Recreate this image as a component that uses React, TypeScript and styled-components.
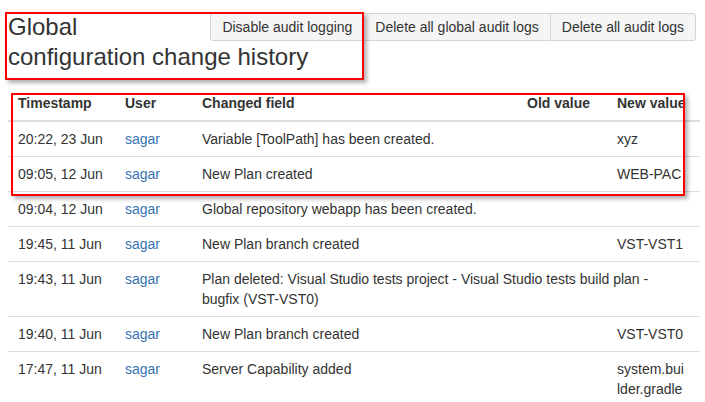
import React from "react";
import styled, { createGlobalStyle } from "styled-components";

const GlobalStyle = createGlobalStyle`
  body {
    margin: 0;
    background: #fff;
    color: #333;
    font-family: "Liberation Sans", Arial, sans-serif;
    font-size: 14px;
    line-height: 20px;
  }
`;

const Page = styled.div`
  position: relative;
  padding: 0 9px 0 8px;
`;

// title wraps round the floated buttons, as in the original page
const Header = styled.div`
  display: flow-root;
  padding-top: 12px;
`;

const Title = styled.h2`
  margin: 0;
  font-size: 24px;
  font-weight: normal;
  line-height: 30px;
  color: #333;
`;

const ButtonGroup = styled.div`
  float: right;
  display: flex;
  margin: 1px 0 0 8px;
`;

const Button = styled.button`
  font-family: inherit;
  font-size: 14px;
  line-height: 20px;
  color: #333;
  background: #f5f5f5;
  border: 1px solid #d4d4d4;
  padding: 3px 11px;
  margin-left: -1px;
  border-radius: 0;
  cursor: pointer;
  white-space: nowrap;
  &:first-child {
    margin-left: 0;
    border-radius: 3px 0 0 3px;
  }
  &:last-child {
    border-radius: 0 3px 3px 0;
  }
`;

const Table = styled.table`
  margin-top: 14px;
  width: 692px;
  border-collapse: collapse;
  table-layout: fixed;
`;

const Th = styled.th<{ $w: number }>`
  width: ${(p) => p.$w}px;
  text-align: left;
  font-weight: bold;
  padding: 7px 8px 7px 10px;
  border-bottom: 2px solid #ddd;
  white-space: nowrap;
`;

const Td = styled.td<{ $wide?: boolean }>`
  padding: 7px ${(p) => (p.$wide ? 30 : 8)}px 7px 10px;
  vertical-align: top;
  border-top: 1px solid #ddd;
  tbody tr:first-child & {
    border-top: 0;
  }
`;

const UserLink = styled.a`
  color: #3572b0;
  text-decoration: none;
`;

const Value = styled.div`
  max-width: 68px;
  word-break: break-all;
`;

const Highlight = styled.div<{ $l: number; $t: number; $w: number; $h: number }>`
  position: absolute;
  left: ${(p) => p.$l}px;
  top: ${(p) => p.$t}px;
  width: ${(p) => p.$w}px;
  height: ${(p) => p.$h}px;
  box-sizing: border-box;
  border: 2px solid #ff0000;
  box-shadow: 3px 3px 4px rgba(0, 0, 0, 0.3);
  pointer-events: none;
`;

type Row = {
  time: string;
  field: string;
  newValue?: string;
  span?: boolean;
};

const rows: Row[] = [
  { time: "20:22, 23 Jun", field: "Variable [ToolPath] has been created.", newValue: "xyz" },
  { time: "09:05, 12 Jun", field: "New Plan created", newValue: "WEB-PAC" },
  { time: "09:04, 12 Jun", field: "Global repository webapp has been created.", span: true },
  { time: "19:45, 11 Jun", field: "New Plan branch created", newValue: "VST-VST1" },
  {
    time: "19:43, 11 Jun",
    field:
      "Plan deleted: Visual Studio tests project - Visual Studio tests build plan - bugfix (VST-VST0)",
    span: true,
  },
  { time: "19:40, 11 Jun", field: "New Plan branch created", newValue: "VST-VST0" },
  { time: "17:47, 11 Jun", field: "Server Capability added", newValue: "system.builder.gradle" },
];

export default function App() {
  return (
    <Page>
      <GlobalStyle />
      <Header>
        <ButtonGroup>
          <Button>Disable audit logging</Button>
          <Button>Delete all global audit logs</Button>
          <Button>Delete all audit logs</Button>
        </ButtonGroup>
        <Title>Global configuration change history</Title>
      </Header>
      <Table>
        <thead>
          <tr>
            <Th $w={89}>Timestamp</Th>
            <Th $w={59}>User</Th>
            <Th $w={307}>Changed field</Th>
            <Th $w={72}>Old value</Th>
            <Th $w={75}>New value</Th>
          </tr>
        </thead>
        <tbody>
          {rows.map((r, i) => (
            <tr key={i}>
              <Td>{r.time}</Td>
              <Td>
                <UserLink href="#">sagar</UserLink>
              </Td>
              {r.span ? (
                <Td colSpan={3} $wide>
                  {r.field}
                </Td>
              ) : (
                <>
                  <Td>{r.field}</Td>
                  <Td></Td>
                  <Td>
                    <Value>{r.newValue}</Value>
                  </Td>
                </>
              )}
            </tr>
          ))}
        </tbody>
      </Table>
      {/* red annotation boxes */}
      <Highlight $l={5} $t={12} $w={359} $h={68} />
      <Highlight $l={11} $t={93} $w={674} $h={103} />
    </Page>
  );
}
